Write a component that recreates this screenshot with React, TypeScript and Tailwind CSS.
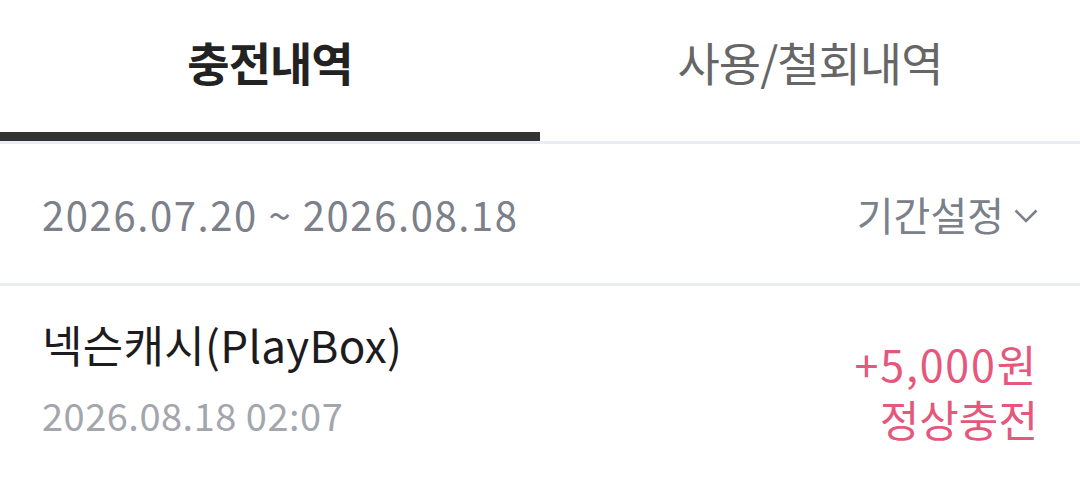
const font = { fontFamily: '"Noto Sans CJK KR", "Noto Sans", sans-serif' };

const App = () => {
    return (
        <div style={font} className="w-[1080px] h-[491px] bg-white overflow-hidden">
            {/* Tabs */}
            <div className="flex border-b-[3px] border-[#ebebf2]">
                <div className="flex-1 h-[141px] flex flex-col">
                    <div className="flex-1 flex items-center justify-center pb-[10px] text-[46px] font-bold text-[#222222] tracking-[-1px]">
                        충전내역
                    </div>
                    <div className="h-[9px] bg-[#333333]" />
                </div>
                <div className="flex-1 h-[141px] flex flex-col">
                    <div className="flex-1 flex items-center justify-center pb-[10px] text-[46px] text-[#666666] tracking-[-1px]">
                        사용/철회내역
                    </div>
                    <div className="h-[9px]" />
                </div>
            </div>

            {/* Period */}
            <div className="h-[142px] flex items-center justify-between px-[42px] border-b-[3px] border-[#ebebf2]">
                <span className="text-[40px] text-[#7b808a] tracking-[1.6px]">2026.07.20 ~ 2026.08.18</span>
                <button className="flex items-center gap-[10px] text-[40px] text-[#7b808a]">
                    기간설정
                    <svg width="24" height="14" viewBox="0 0 24 14" className="mt-[4px]">
                        <polyline points="1.5,1.5 12,12 22.5,1.5" fill="none" stroke="#7b808a" strokeWidth="2.6" />
                    </svg>
                </button>
            </div>

            {/* Item */}
            <div className="flex justify-between px-[42px] pt-[28px]">
                <div className="flex flex-col">
                    <span className="text-[44px] text-[#1c1c1e] leading-[60px] tracking-[0.3px]">넥슨캐시(PlayBox)</span>
                    <span className="text-[38px] text-[#a3a6ad] leading-[50px] mt-[16px] tracking-[0.5px]">2026.08.18 02:07</span>
                </div>
                <div className="flex flex-col items-end gap-[12px] text-[43px] text-[#e5587c] leading-[43px] pt-[28px]">
                    <span className="tracking-[1.8px]">+5,000원</span>
                    <span>정상충전</span>
                </div>
            </div>
        </div>
    );
};

export default App;
